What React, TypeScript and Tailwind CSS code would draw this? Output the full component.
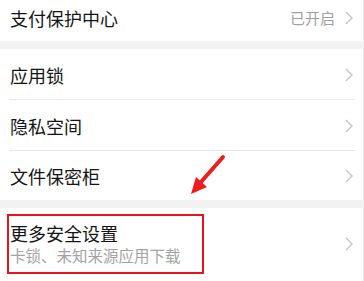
import React from "react";

const font = { fontFamily: '"Noto Sans CJK SC", "Noto Sans", sans-serif' };

function Chevron() {
  return (
    <svg width="8" height="14" viewBox="0 0 8 14" className="shrink-0">
      <path d="M1 1 L7 7 L1 13" fill="none" stroke="#c4c4c4" strokeWidth="1.3" />
    </svg>
  );
}

function Row({ label, h, sep = true }: { label: string; h: string; sep?: boolean }) {
  return (
    <div className={`relative flex items-center justify-between bg-white pl-[10px] pr-[11px] ${h}`}>
      <span className="text-[18px] text-[#141414] leading-none">{label}</span>
      <Chevron />
      {sep && <div className="absolute bottom-0 left-[9px] right-[9px] h-px bg-[#e8e8e8]" />}
    </div>
  );
}

export default function App() {
  return (
    <div className="relative w-[364px] h-[281px] overflow-hidden bg-white" style={font}>
      <div className="flex h-[41px] items-center justify-between bg-white pl-[10px] pr-[11px] pb-[6px]">
        <span className="text-[18px] text-[#141414] leading-none">支付保护中心</span>
        <div className="flex items-center gap-[10px]">
          <span className="text-[15px] text-[#a0a0a0] leading-none">已开启</span>
          <Chevron />
        </div>
      </div>
      <div className="h-[8px] bg-[#f2f2f2]" />
      <Row label="应用锁" h="h-[51px]" />
      <Row label="隐私空间" h="h-[51px]" />
      <Row label="文件保密柜" h="h-[49px]" sep={false} />
      <div className="h-[8px] bg-[#f2f2f2]" />
      <div className="flex h-[73px] items-center justify-between bg-white pl-[7px] pr-[11px] pb-[1px]">
        <div className="flex h-[60px] w-[197px] flex-col justify-center gap-[6px] border-2 border-[#e8141b] pl-[1px]">
          <span className="text-[18px] text-[#141414] leading-none">更多安全设置</span>
          <span className="text-[15.5px] text-[#a3a3a3] leading-none">卡锁、未知来源应用下载</span>
        </div>
        <Chevron />
      </div>
      <svg className="absolute left-0 top-0 pointer-events-none" width="364" height="281">
        <line x1="223" y1="157" x2="201" y2="182" stroke="#ee1c1c" strokeWidth="4" strokeLinecap="round" />
        <polygon points="191,194 196,177 207,187" fill="#ee1c1c" />
      </svg>
      <div className="absolute right-0 top-0 h-full w-px bg-[#ececec]" />
    </div>
  );
}
